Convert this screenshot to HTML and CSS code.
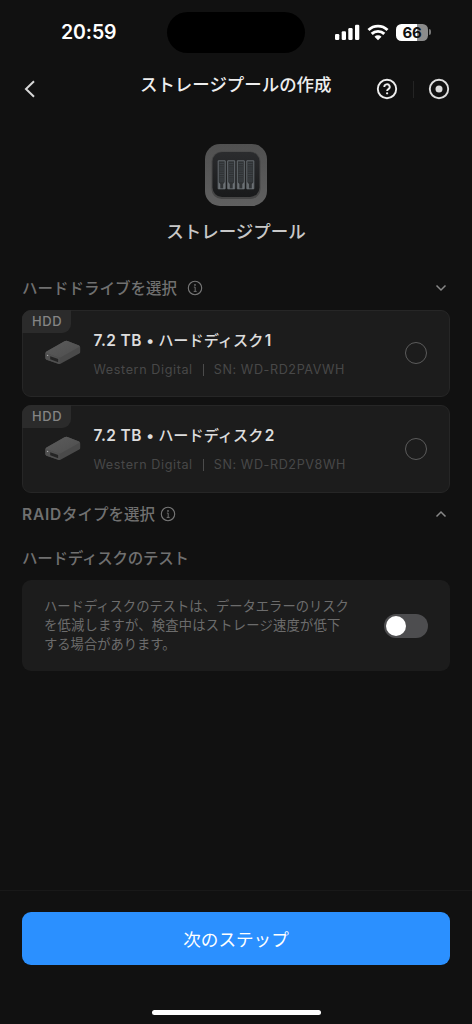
FILE: index.html
```html
<!DOCTYPE html>
<html lang="ja">
<head>
<meta charset="utf-8">
<meta name="viewport" content="width=device-width, initial-scale=1">
<title>ストレージプールの作成</title>
<link rel="stylesheet" href="styles.css">
</head>
<body>
<svg class="defs" width="0" height="0" aria-hidden="true">
  <defs>
    <linearGradient id="top" x1="0" y1="0" x2="1" y2="1"><stop offset="0" stop-color="#5c5c5c"/><stop offset="1" stop-color="#4e4e4e"/></linearGradient>
    <linearGradient id="frame" x1="0" y1="0" x2="0" y2="1"><stop offset="0" stop-color="#505050"/><stop offset="1" stop-color="#606060"/></linearGradient>
    <linearGradient id="bay" x1="0" y1="0" x2="0" y2="1"><stop offset="0" stop-color="#2b2c2e"/><stop offset="1" stop-color="#191a1b"/></linearGradient>
  </defs>
  <symbol id="info" viewBox="0 0 16 16"><circle cx="8" cy="8" r="6.700" fill="none" stroke="currentColor" stroke-width="1.100"/><circle cx="8" cy="4.900" r=".85" fill="currentColor"/><path d="M6.900 7.100h1.300v4.300M6.700 11.400h3" fill="none" stroke="currentColor" stroke-width=".9"/></symbol>
  <symbol id="drive" viewBox="0 0 36 26">
    <path d="M.4 14Q.4 13 1.500 12.400L19.500 2.300Q21 1.500 22.500 2L34 6.500Q35.200 7 35.200 8.200V13Q35.200 14 34.200 14.600L15.500 24.800Q14.500 25.300 13.400 24.900L1.500 20.700Q.4 20.200 .4 19Z" fill="#4a4a4a"/>
    <path d="M.7 13.300Q.9 12.700 1.500 12.400L19.500 2.300Q21 1.500 22.500 2L34 6.500Q35.200 7.100 34 7.900L15.800 18.300Q14.700 18.900 13.500 18.500L1.500 14.200Q.7 13.900 .7 13.300Z" fill="url(#top)"/>
    <path d="M.4 13.800L13.500 18.500Q14.600 18.900 14.600 20V25L1.500 20.700Q.4 20.200 .4 19Z" fill="#515151"/>
    <path d="M5.200 17.300L13.200 20.100V23.200L5.200 20.200Z" fill="#252525"/>
    <circle cx="2.600" cy="16.400" r=".7" fill="#aaa"/>
  </symbol>
</svg>
<div class="screen">
  <header class="status">
    <div class="clock">20:59</div>
    <div class="island"></div>
    <div class="indicators">
      <svg class="signal" viewBox="0 0 25 17" fill="#fff"><rect x="0" y="10" width="4.300" height="6" rx="1.200"/><rect x="6.700" y="7.300" width="4.300" height="8.700" rx="1.200"/><rect x="13.300" y="4" width="4.300" height="12" rx="1.200"/><rect x="20" y=".8" width="4.300" height="15.200" rx="1.200"/></svg>
      <svg class="wifi" viewBox="0 0 22 17" fill="none" stroke="#fff" stroke-width="2.900"><path d="M1.500 6A13.500 13.500 0 0 1 20.500 6"/><path d="M4.700 9.900A9 9 0 0 1 17.300 9.900"/><path d="M7.500 12.700A5 5 0 0 1 14.500 12.700L11 16.300Z" fill="#fff" stroke="none"/></svg>
      <div class="battery"><span>66</span></div>
      <i class="battery-cap"></i>
    </div>
  </header>

  <nav class="nav">
    <svg class="back" viewBox="0 0 12 18" fill="none" stroke="#d8d8d8" stroke-width="2"><path d="M10 1.300L2 9l8 7.700"/></svg>
    <h1>ストレージプールの作成</h1>
    <div class="nav-actions">
      <svg viewBox="0 0 22 22" fill="none" stroke="#eee" stroke-width="1.900"><circle cx="11" cy="11" r="9.200"/><path d="M8.300 9A2.700 2.600 0 1 1 12.400 11.100Q11.100 11.900 11.100 13"/><circle cx="11.100" cy="15.300" r="1.150" fill="#eee" stroke="none"/></svg>
      <i></i>
      <svg viewBox="0 0 22 22" fill="none" stroke="#ddd" stroke-width="1.900"><circle cx="11" cy="11" r="9.200"/><circle cx="11" cy="11" r="3.500" fill="#ddd" stroke="none"/></svg>
    </div>
  </nav>

  <section class="hero">
    <svg class="pool" viewBox="0 0 62 62">
      <rect width="62" height="62" rx="15" fill="url(#frame)"/>
      <rect x="6.500" y="7.500" width="49" height="47.500" rx="10" fill="#464646"/>
      <rect x="7.500" y="8" width="47" height="45" rx="9.500" fill="url(#bay)"/>
      <g fill="#303335" stroke="#666c70" stroke-width="1"><path d="M13.200 16.800h7v28h-7z"/><path d="M22.700 16.800h7v28h-7z"/><path d="M32.300 16.800h7v28h-7z"/><path d="M41.800 16.800h7v28h-7z"/></g>
      <g stroke="#3d4246" stroke-width="4.500" stroke-dasharray="1 1.200"><path d="M16.700 19v19M26.200 19v19M35.800 19v19M45.300 19v19"/></g>
      <g fill="#6b7074"><path d="M13.500 38l1.800 2v5h-1.800zM20 38l-1.800 2v5H20zM23 38l1.800 2v5H23zM29.500 38l-1.800 2v5h1.800zM32.600 38l1.800 2v5h-1.800zM39.100 38l-1.800 2v5h1.800zM42.100 38l1.800 2v5h-1.800zM48.600 38l-1.800 2v5h1.800z"/></g>
    </svg>
    <h2>ストレージプール</h2>
  </section>

  <main>
    <div class="section drives-head"><h3>ハードドライブを選択</h3><svg class="info"><use href="#info"/></svg><svg class="chevron" viewBox="0 0 12 8"><path d="M1.500 1.500L6 6l4.500-4.500"/></svg></div>
    <div class="drives">
      <article class="drive">
        <span class="tag">HDD</span>
        <svg class="drive-icon"><use href="#drive"/></svg>
        <div class="drive-text"><h4>7.2 TB • <span>ハードディスク</span>1</h4><p>Western Digital<b></b>SN: WD-RD2PAVWH</p></div>
        <i class="radio"></i>
      </article>
      <article class="drive">
        <span class="tag">HDD</span>
        <svg class="drive-icon"><use href="#drive"/></svg>
        <div class="drive-text"><h4>7.2 TB • <span>ハードディスク</span>2</h4><p>Western Digital<b></b>SN: WD-RD2PV8WH</p></div>
        <i class="radio"></i>
      </article>
    </div>
    <div class="section raid-head"><h3><span>RAID</span>タイプを選択</h3><svg class="info"><use href="#info"/></svg><svg class="chevron" viewBox="0 0 12 8"><path d="M1.500 6.500L6 2l4.500 4.500"/></svg></div>
    <h3 class="test-head">ハードディスクのテスト</h3>
    <div class="test">
      <p>ハードディスクのテストは、データエラーのリスク<br><span>を低減しますが、検査中はストレージ速度が低下</span><br>する場合があります。</p>
      <div class="switch"><i></i></div>
    </div>
  </main>

  <footer>
    <button>次のステップ</button>
    <div class="home"></div>
  </footer>
</div>
</body>
</html>
```
FILE: styles.css
```css
* { box-sizing: border-box; margin: 0; padding: 0; }
body { background: #111; color: #ddd; font-family: Inter, "Noto Sans CJK JP", sans-serif; }
.defs { position: absolute; }
svg { display: block; flex: none; }
h1, h2, h3, h4 { font-weight: 500; white-space: nowrap; }
.screen { width: 472px; height: 1024px; display: flex; flex-direction: column; overflow: hidden; }

.status { height: 65px; display: grid; grid-template-columns: 167px 138px 1fr; padding-top: 12px; }
.clock { padding-left: 61px; font-size: 19.500px; font-weight: 600; line-height: 41px; color: #fff; letter-spacing: -.1px; }
.island { height: 41px; border-radius: 21px; background: #000; }
.indicators { height: 40px; display: flex; align-items: center; padding-left: 30px; }
.signal { width: 25px; height: 17px; }
.wifi { width: 22px; height: 17px; margin-left: 7px; }
.battery { width: 32px; height: 17px; margin-left: 7px; border-radius: 5.500px; background: linear-gradient(90deg, #fff 66%, #8c8c8c 66%); color: #111; font-size: 15px; font-weight: 700; line-height: 17px; text-align: center; letter-spacing: -.2px; }
.battery-cap { width: 2px; height: 6px; margin-left: 1px; border-radius: 0 3px 3px 0; background: #777; }

.nav { height: 48px; display: grid; grid-template-columns: 140px 192px 1fr; align-items: center; }
.back { width: 12px; height: 18px; margin-left: 24px; }
h1 { font-size: 17.450px; line-height: 26px; color: #eee; margin-top: -9px; }
.nav-actions { display: flex; align-items: center; padding-left: 44px; }
.nav-actions svg { width: 22px; height: 22px; }
.nav-actions i { width: 1px; height: 17px; margin: 0 14px 0 15px; background: #242424; }

.hero { height: 152px; display: flex; flex-direction: column; align-items: center; padding-top: 31px; }
.pool { width: 62px; height: 62px; }
h2 { margin-top: 12px; font-size: 17.500px; line-height: 27px; color: #c8c8c8; }

main { flex: 1; padding: 0 22px; }
.section { display: flex; align-items: center; color: #777; }
.section h3 { padding-top: 2px; }
h3 { font-size: 15.500px; line-height: 22px; color: #707070; }
h3 span { font-weight: 600; letter-spacing: .8px; }
.drives-head { height: 44.500px; padding-top: 1px; }
.info { width: 16px; height: 16px; margin-left: 10px; }
.chevron { width: 12px; height: 8px; margin: 0 3px 0 auto; fill: none; stroke: #888; stroke-width: 1.500; }
.drives { display: grid; gap: 8px; }
.drive { position: relative; height: 87.500px; display: flex; align-items: center; padding: 0 22px; border: 1px solid #262626; border-radius: 9px; background: #1c1c1c; }
.tag { position: absolute; left: -1px; top: -1px; width: 49px; height: 23px; border-radius: 9px 0 9px 0; background: #2b2b2b; color: #858585; font-size: 13px; font-weight: 500; line-height: 23px; letter-spacing: .6px; padding-left: 10px; }
.drive-icon { width: 36px; height: 26px; margin-top: -2px; }
.drive-text { flex: 1; margin-left: 12.500px; }
h4 { font-size: 15.500px; font-weight: 600; line-height: 24px; letter-spacing: .4px; color: #ddd; margin-top: 2px; }
h4 span { display: inline-block; width: 106.500px; margin-left: -.5px; font-size: 15.200px; font-weight: 500; letter-spacing: 0; }
.drive p { display: flex; align-items: center; margin-top: 7px; font-size: 12.600px; line-height: 20px; letter-spacing: .6px; color: #484848; white-space: nowrap; }
.drive b { width: 1px; height: 12px; margin: 0 10px; background: #4b4b4b; }
.radio { width: 22px; height: 22px; border: 1px solid #5b5b5b; border-radius: 50%; }
.raid-head { height: 43px; }
.raid-head .info { margin-left: 5px; }
.test-head { height: 44.500px; padding-top: 12px; letter-spacing: -.25px; }
.test { height: 91px; display: flex; align-items: center; justify-content: space-between; padding: 0 22px; border-radius: 9px; background: #1c1c1c; }
.test p { color: #6c6c6c; font-size: 13.300px; line-height: 18.700px; white-space: nowrap; }
.test p span { letter-spacing: .2px; }
.switch { width: 44px; height: 24px; padding: 2px; border-radius: 12px; background: #4d4d4f; }
.switch i { display: block; width: 20px; height: 20px; border-radius: 50%; background: #fff; }

footer { height: 134px; padding: 21px 22px 0; border-top: 1px solid #191919; }
button { display: block; width: 428px; height: 53px; border: 0; border-radius: 9px; background: #2b90ff; color: #fff; font: 400 17.600px/52px "Noto Sans CJK JP", sans-serif; }
.home { width: 169px; height: 5px; margin: 45px auto 0; border-radius: 3px; background: #fff; }
```
